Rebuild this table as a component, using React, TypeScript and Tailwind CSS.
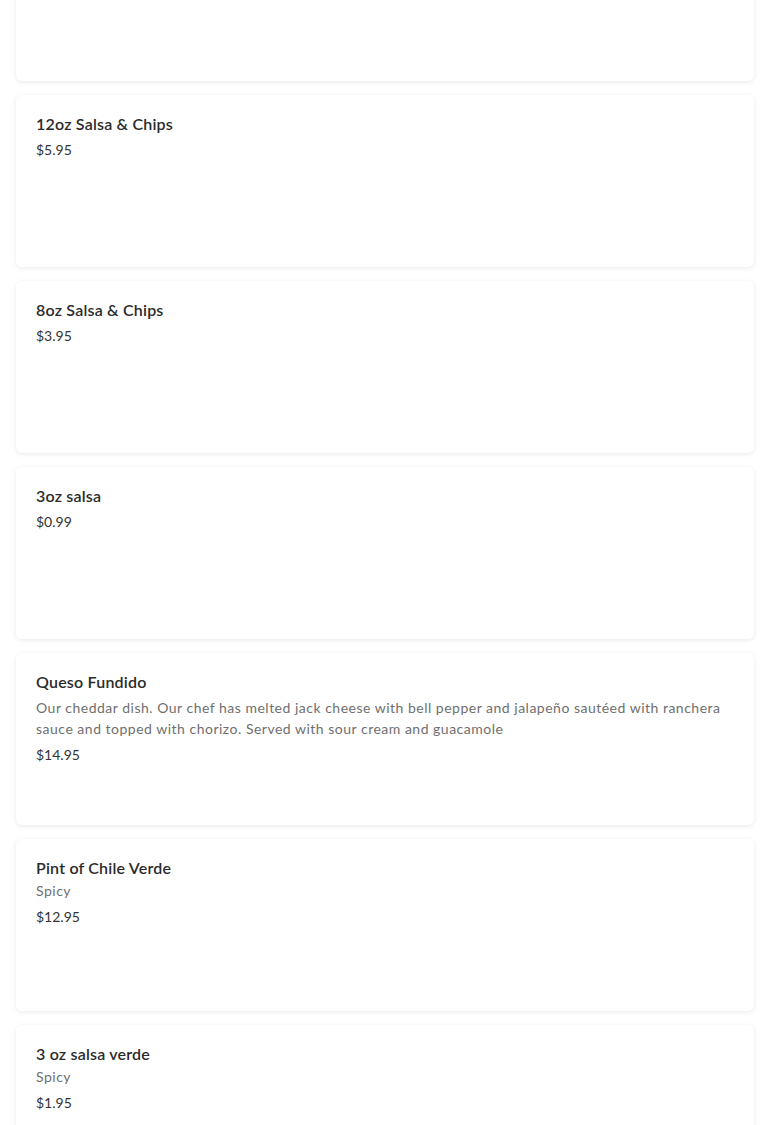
const ITEMS = [
  { name: "", price: "" },
  { name: "12oz Salsa & Chips", price: "$5.95" },
  { name: "8oz Salsa & Chips", price: "$3.95" },
  { name: "3oz salsa", price: "$0.99" },
  {
    name: "Queso Fundido",
    description:
      "Our cheddar dish. Our chef has melted jack cheese with bell pepper and jalapeño sautéed with ranchera sauce and topped with chorizo. Served with sour cream and guacamole",
    price: "$14.95",
  },
  { name: "Pint of Chile Verde", description: "Spicy", price: "$12.95" },
  { name: "3 oz salsa verde", description: "Spicy", price: "$1.95" },
];

export default function App() {
  return (
    <div className="min-h-screen bg-white font-['Lato',sans-serif]">
      <div className="flex flex-col gap-[14px] px-4 -mt-[91px]">
        {ITEMS.map((item, i) => (
          <div
            key={i}
            className="h-[172px] rounded-[6px] bg-white px-5 pt-[18px] shadow-[0_1px_5px_rgba(0,0,0,0.09)]"
          >
            {item.name && (
              <>
                <h3 className="text-[16px] leading-[22px] font-semibold tracking-[0.2px] text-[#2b2b2b]">
                  {item.name}
                </h3>
                {item.description && (
                  <p
                    className={`text-[14px] leading-[21px] tracking-[0.5px] text-[#6f6f6f] ${
                      item.description === "Spicy" ? "mt-[1px]" : "mt-1"
                    }`}
                  >
                    {item.description}
                  </p>
                )}
                <p
                  className={`text-[14px] leading-[20px] text-[#333] ${
                    item.description ? "mt-[6px]" : "mt-[5px]"
                  }`}
                >
                  {item.price}
                </p>
              </>
            )}
          </div>
        ))}
      </div>
    </div>
  );
}
